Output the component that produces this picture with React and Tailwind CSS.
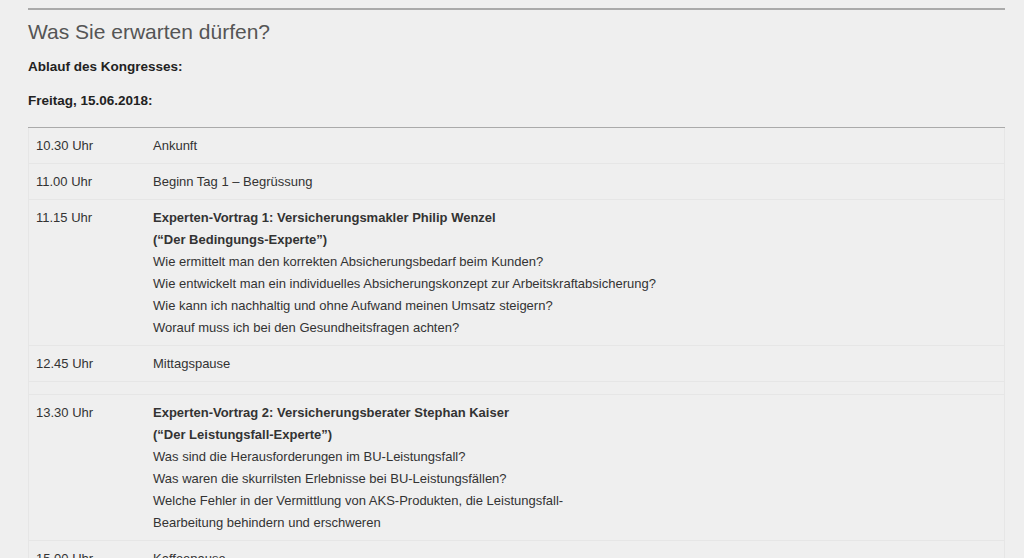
import React from "react";

const rows = [
  { t: "10.30 Uhr", d: ["Ankunft"] },
  { t: "11.00 Uhr", d: ["Beginn Tag 1 – Begrüssung"] },
  {
    t: "11.15 Uhr",
    b: ["Experten-Vortrag 1: Versicherungsmakler Philip Wenzel", "(“Der Bedingungs-Experte”)"],
    d: [
      "Wie ermittelt man den korrekten Absicherungsbedarf beim Kunden?",
      "Wie entwickelt man ein individuelles Absicherungskonzept zur Arbeitskraftabsicherung?",
      "Wie kann ich nachhaltig und ohne Aufwand meinen Umsatz steigern?",
      "Worauf muss ich bei den Gesundheitsfragen achten?",
    ],
  },
  { t: "12.45 Uhr", d: ["Mittagspause"] },
  { empty: true },
  {
    t: "13.30 Uhr",
    b: ["Experten-Vortrag 2: Versicherungsberater Stephan Kaiser", "(“Der Leistungsfall-Experte”)"],
    d: [
      "Was sind die Herausforderungen im BU-Leistungsfall?",
      "Was waren die skurrilsten Erlebnisse bei BU-Leistungsfällen?",
      "Welche Fehler in der Vermittlung von AKS-Produkten, die Leistungsfall-",
      "Bearbeitung behindern und erschweren",
    ],
  },
  { t: "15.00 Uhr", d: ["Kaffeepause"] },
];

export default function App() {
  return (
    <div
      className="h-[558px] bg-[#efefef] text-[#333] overflow-hidden"
      style={{ fontFamily: '"Liberation Sans", Arial, sans-serif' }}
    >
      <div className="pl-[28px] pr-[19px] pt-[8px]">
        <div className="border-t-2 border-[#aaaaaa]" />
        <h2 className="text-[21px] leading-[24px] text-[#555] font-normal mt-[10px]">Was Sie erwarten dürfen?</h2>
        <p className="text-[13.5px] leading-[16px] font-bold text-[#222] mt-[15px]">Ablauf des Kongresses:</p>
        <p className="text-[13.5px] leading-[16px] font-bold text-[#222] mt-[18px]">Freitag, 15.06.2018:</p>
        <div className="border-t border-[#aaaaaa] mt-[18px]" />
        <div className="border-x border-[#e6e6e6] text-[13px] leading-[22px] text-[#333]">
          {rows.map((r, i) => (
            <div
              key={i}
              className={`flex ${i > 0 ? "border-t border-[#e6e6e6]" : ""} ${r.empty ? "h-[13px]" : "pt-[7px] pb-[6px]"}`}
            >
              {!r.empty && (
                <>
                  <div className="w-[124px] shrink-0 pl-[7px]">{r.t}</div>
                  <div>
                    {r.b && r.b.map((x, j) => (
                      <div key={"b" + j} className="font-bold">{x}</div>
                    ))}
                    {r.d.map((x, j) => (
                      <div key={j}>{x}</div>
                    ))}
                  </div>
                </>
              )}
            </div>
          ))}
        </div>
      </div>
    </div>
  );
}
